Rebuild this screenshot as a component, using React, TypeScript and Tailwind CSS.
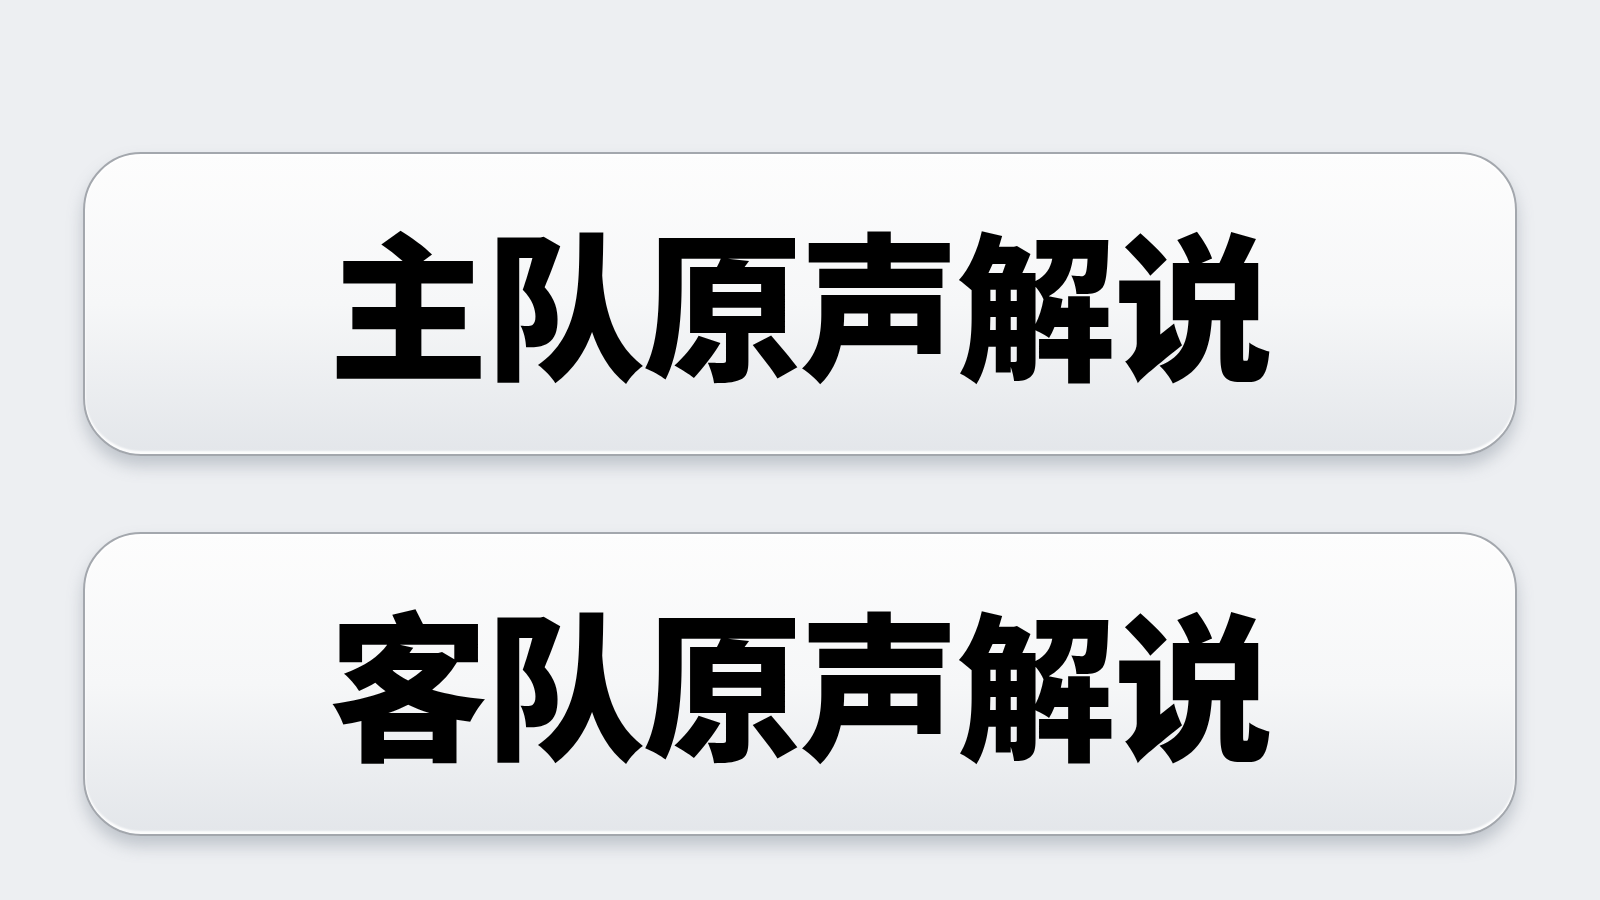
const labels = ['主队原声解说', '客队原声解说'];

export default function App() {
  return (
    <div className="w-[1600px] h-[900px] bg-[#edeff2] flex flex-col items-center pt-[152px] gap-[76px]">
      {labels.map((label) => (
        <button
          key={label}
          className="w-[1434px] h-[304px] rounded-[58px] border-2 border-[#a3a7ad] bg-gradient-to-b from-[#fdfdfd] via-[#f6f7f8] to-[#e3e6ea] shadow-[0_10px_16px_rgba(110,120,135,0.35),inset_0_-3px_2px_rgba(255,255,255,0.9),inset_0_2px_3px_rgba(255,255,255,1)] flex items-center justify-center"
        >
          <span
            className="text-[159px] leading-none font-black text-black tracking-[-2px] pb-[10px]"
            style={{ fontFamily: '"Noto Sans CJK SC", "Noto Sans", sans-serif' }}
          >
            {label}
          </span>
        </button>
      ))}
    </div>
  );
}
